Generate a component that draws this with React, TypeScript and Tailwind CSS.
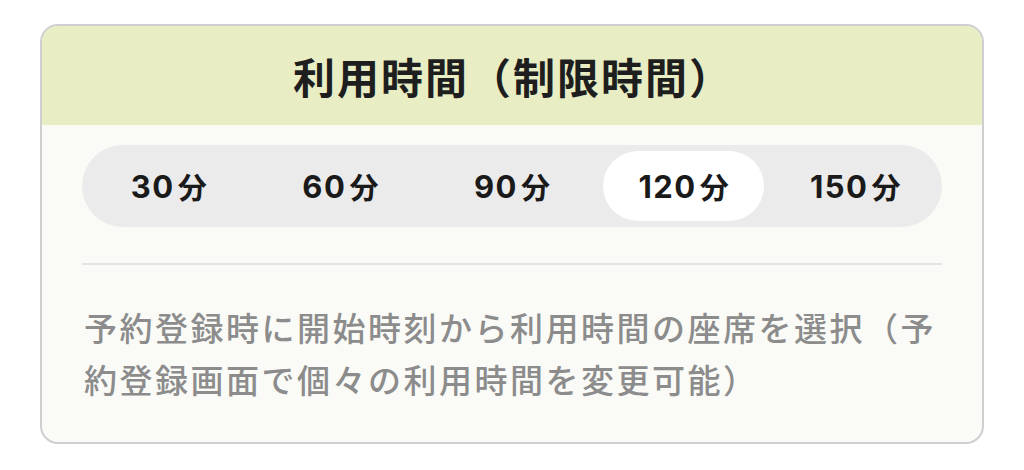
import React from "react";

const options = ["30", "60", "90", "120", "150"];

export default function App() {
  return (
    <div
      className="w-[1024px] h-[470px] bg-white pt-[24px] pl-[40px]"
      style={{ fontFamily: '"Noto Sans CJK JP", "Noto Sans", sans-serif' }}
    >
      <div className="w-[944px] h-[420px] rounded-[18px] border-2 border-[#cfcfcf] bg-[#fafbf7] overflow-hidden flex flex-col">
        <div className="h-[99px] bg-[#e8edc4] flex items-center justify-center shrink-0">
          <span className="text-[42px] font-bold text-[#1e1e1e] tracking-[2px] leading-none pl-[2px]">
            利用時間（制限時間）
          </span>
        </div>
        <div className="px-[40px] pt-[20px]">
          <div className="h-[82px] rounded-full bg-[#ebebeb] px-[6px] grid grid-cols-5 gap-[10px] items-center">
            {options.map((o) => (
              <div
                key={o}
                className={
                  o === "120"
                    ? "h-[70px] rounded-full bg-white flex items-center justify-center"
                    : "h-[70px] rounded-full flex items-center justify-center"
                }
              >
                <span className="flex items-center text-[#1a1a1a] leading-none">
                  <span className="font-['Inter'] font-bold text-[31px] tracking-[1.5px]">{o}</span>
                  <span className="ml-[3px] text-[29px] font-bold">分</span>
                </span>
              </div>
            ))}
          </div>
          <div className="h-[2px] bg-[#e4e4e4] mt-[36px]" />
          <p className="mt-[36px] text-[33px] leading-[52px] text-[#8c8c8c] font-medium tracking-[2.5px] pl-[2px]">
            予約登録時に開始時刻から利用時間の座席を選択（予約登録画面で個々の利用時間を変更可能）
          </p>
        </div>
      </div>
    </div>
  );
}
